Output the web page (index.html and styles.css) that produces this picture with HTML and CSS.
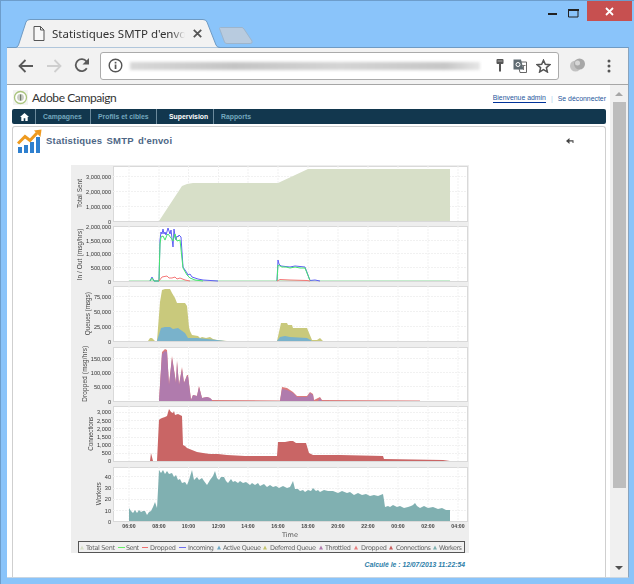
FILE: index.html
```html
<!DOCTYPE html>
<html lang="fr">
<head>
<meta charset="utf-8">
<title>Statistiques SMTP d'envoi</title>
<link rel="stylesheet" href="styles.css">
</head>
<body>
<div class="tabstrip">
  <div class="tabs">
    <div class="tab">
      <svg class="tab-shape" width="208" height="29" viewBox="0 0 208 29"><path d="M0 28.5H2.5Q4.5 28.500 5.500 26L13 3Q14 .5 17 .5H190Q193 .5 194 3L203 26Q204 28.500 207 28.500" fill="#f2f2f2" stroke="#6f9bc4"/></svg>
      <svg class="doc-icon" width="12" height="15" viewBox="0 0 12 15"><path d="M1 .5H7.500L11 4V14.500H1ZM7.500 .5V4H11" fill="#f8f8f8" stroke="#555"/></svg>
      <span class="tab-title">Statistiques SMTP d'envoi</span>
      <svg class="tab-close" width="9" height="9" viewBox="0 0 9 9"><path d="M.8 .8L8.200 8.200M8.200 .8L.8 8.200" stroke="#555" stroke-width="1.800"/></svg>
    </div>
    <svg class="newtab" width="34" height="17" viewBox="0 0 34 17"><path d="M.5 1.500Q.5 .5 1.500 .5H23Q24 .5 25 2L33 14Q34 16.500 31 16.500H8Q6 16.500 5.500 15Z" fill="#b8cbdf" stroke="#9db5cc"/></svg>
  </div>
  <div class="controls">
    <svg class="ctl-min" width="9" height="3" viewBox="0 0 9 3"><rect width="9" height="2" y="1" fill="#222"/></svg>
    <svg class="ctl-max" width="11" height="9" viewBox="0 0 11 9"><path d="M.5 .5H10V8H.5Z" fill="none" stroke="#222"/><rect x="0" y="0" width="11" height="2" fill="#222"/></svg>
    <div class="ctl-close"><svg width="9" height="9" viewBox="0 0 9 9"><path d="M1 1L8 8M8 1L1 8" stroke="#fff" stroke-width="1.800"/></svg></div>
  </div>
</div>

<div class="browser">
  <div class="toolbar">
    <svg class="tb-back" width="16" height="14" viewBox="0 0 16 14"><path d="M15 7H2M7.500 1L1.500 7L7.500 13" fill="none" stroke="#5a5a5a" stroke-width="1.800"/></svg>
    <svg class="tb-fwd" width="16" height="14" viewBox="0 0 16 14"><path d="M1 7H14M8.500 1L14.500 7L8.500 13" fill="none" stroke="#cfcfcf" stroke-width="1.800"/></svg>
    <svg class="tb-reload" width="16" height="15" viewBox="0 0 16 15"><path d="M12.800 10.300A6 6 0 1 1 12.500 3.500" fill="none" stroke="#5a5a5a" stroke-width="1.800"/><path d="M15 0V6.500H8.500Z" fill="#5a5a5a"/></svg>
    <div class="omnibox">
      <svg class="om-info" width="15" height="15" viewBox="0 0 15 15"><circle cx="7.500" cy="7.500" r="6.300" fill="none" stroke="#555" stroke-width="1.400"/><rect x="6.700" y="6.500" width="1.700" height="4.500" fill="#555"/><rect x="6.700" y="3.800" width="1.700" height="1.700" fill="#555"/></svg>
      <div class="om-url"></div>
      <div class="om-icons">
        <svg width="8" height="13" viewBox="0 0 8 13"><path d="M.5 1Q.5 0 1.500 0H6.500Q7.500 0 7.500 1V4Q7.500 5 6.500 5H5V12L4 13L3 12V5H1.500Q.5 5 .5 4Z" fill="#555"/><rect x="1.500" y="1.500" width="5" height="1" fill="#aaa"/></svg>
        <svg width="14" height="14" viewBox="0 0 14 14"><path d="M4.500 3H13.500V13.500H7Z" fill="#fff" stroke="#666"/><path d="M.5 .5H8L10.500 10.500H.5Z" fill="#5f6b72"/><circle cx="5" cy="5.500" r="2" fill="none" stroke="#fff"/><path d="M9 6.500H12.500M10.500 6V11" stroke="#777"/></svg>
        <svg width="15" height="14" viewBox="0 0 15 14"><path d="M7.500 1.200L9.300 5.300L13.800 5.700L10.400 8.600L11.400 13L7.500 10.700L3.600 13L4.600 8.600L1.200 5.700L5.700 5.300Z" fill="#fff" stroke="#555" stroke-width="1.500"/></svg>
      </div>
    </div>
    <svg class="tb-profile" width="17" height="15" viewBox="0 0 17 15"><circle cx="6.500" cy="8" r="5.500" fill="#c2c2c2"/><circle cx="10.500" cy="6" r="5.500" fill="#a8a8a8"/><circle cx="8.500" cy="5" r="2.500" fill="#d6d6d6"/></svg>
    <svg class="tb-menu" width="4" height="14" viewBox="0 0 4 14"><circle cx="2" cy="2" r="1.500" fill="#555"/><circle cx="2" cy="7" r="1.500" fill="#555"/><circle cx="2" cy="12" r="1.500" fill="#555"/></svg>
  </div>

  <div class="viewport">
    <div class="page">
      <header class="page-head">
        <div class="brand">
          <svg class="brand-logo" width="15" height="15" viewBox="0 0 15 15"><rect width="15" height="15" fill="#f3f3f3"/><circle cx="7.500" cy="7.500" r="6" fill="#fff" stroke="#a9c47c" stroke-width="1.300"/><circle cx="7.500" cy="7.500" r="3.400" fill="#c9ccc4"/><rect x="7" y="4.500" width="1.200" height="6" fill="#6e7a6a"/></svg>
          <span class="brand-name">Adobe Campaign</span>
        </div>
        <div class="user-links">
          <a class="link-user">Bienvenue admin</a>
          <span class="link-sep">|</span>
          <a class="link-out">Se déconnecter</a>
        </div>
      </header>
      <nav class="nav">
        <span class="nav-item nav-home"><svg width="9" height="8" viewBox="0 0 9 8"><path d="M4.500 0L9 4H7.700V8H5.300V5.300H3.700V8H1.300V4H0Z" fill="#fff"/></svg></span>
        <span class="nav-item nav-a">Campagnes</span>
        <span class="nav-item nav-b">Profils et cibles</span>
        <span class="nav-item nav-c active">Supervision</span>
        <span class="nav-item nav-d">Rapports</span>
      </nav>
      <section class="panel">
        <div class="panel-head">
          <div class="panel-title">
            <svg class="panel-icon" width="25" height="25" viewBox="0 0 25 25"><path d="M1 18H5V24H1ZM7 16H11V24H7ZM13 13H17V24H13ZM19 8H23V24H19Z" fill="#2f80cf"/><path d="M1 14.500L8 7.500L13 11.500L20 4" fill="none" stroke="#ee9a1f" stroke-width="3"/><path d="M17 1.500L24.500 .5L23.500 8Z" fill="#ee9a1f"/></svg>
            <h1 class="panel-name">Statistiques SMTP d'envoi</h1>
          </div>
          <svg class="panel-back" width="8" height="6" viewBox="0 0 8 6"><path d="M3.500 0V6L0 3ZM3 2.200H7.500V5H6.500V3.500H3Z" fill="#444"/></svg>
        </div>

        <svg class="chart" width="398" height="393" viewBox="71 160 398 393">
          <rect class="c-bg" x="71" y="165" width="398" height="388"/>
          <g class="plots">
            <rect x="113.500" y="166.500" width="354" height="55"/>
            <rect x="113.500" y="226.500" width="354" height="55"/>
            <rect x="113.500" y="286.500" width="354" height="55"/>
            <rect x="113.500" y="347.500" width="354" height="54"/>
            <rect x="113.500" y="406.500" width="354" height="55"/>
            <rect x="113.500" y="467.500" width="354" height="54"/>
          </g>
          <path class="grid" d="M129 166V221M159 166V221M188.500 166V221M218.500 166V221M248 166V221M278 166V221M308 166V221M338 166V221M368 166V221M398 166V221M428 166V221M458 166V221M129 226V281M159 226V281M188.500 226V281M218.500 226V281M248 226V281M278 226V281M308 226V281M338 226V281M368 226V281M398 226V281M428 226V281M458 226V281M129 286V341M159 286V341M188.500 286V341M218.500 286V341M248 286V341M278 286V341M308 286V341M338 286V341M368 286V341M398 286V341M428 286V341M458 286V341M129 347V401M159 347V401M188.500 347V401M218.500 347V401M248 347V401M278 347V401M308 347V401M338 347V401M368 347V401M398 347V401M428 347V401M458 347V401M129 406V461M159 406V461M188.500 406V461M218.500 406V461M248 406V461M278 406V461M308 406V461M338 406V461M368 406V461M398 406V461M428 406V461M458 406V461M129 467V521M159 467V521M188.500 467V521M218.500 467V521M248 467V521M278 467V521M308 467V521M338 467V521M368 467V521M398 467V521M428 467V521M458 467V521"/>
          <path class="grid" d="M113 206.500H467M113 191.500H467M113 176.500H467M113 267.500H467M113 253.500H467M113 240.500H467M113 326.500H467M113 311.500H467M113 296.500H467M113 386.500H467M113 372.500H467M113 358.500H467M113 453.500H467M113 445.500H467M113 437.500H467M113 428.500H467M113 420.500H467M113 412.500H467M113 510.500H467M113 499.500H467M113 488.500H467M113 476.500H467"/>

          <path class="a-total" d="M159 221L182 186L187 184L193 183H278L308 169H450V221Z"/>

          <path class="l-base" d="M129 280.500H450"/>
          <path class="l-blue" d="M150 281L152 277L154 281H159L160 240L161 232L162 234L163 229L164 234L165 232L166 235L168 228L170 234L171 230L173 247L174 229L175 236L176 240L177 236L178 237L179 235L181 237L183 267L185 270L187 273L188 275L190 274L192 277L195 278L198 279L203 280L218 281M277 281L278 260L279 264L281 266L290 267L295 266L305 267L310 280.500L315 280L320 281"/>
          <path class="l-green" d="M150 281L152 278L154 281H159L160 244L161 237L163 236L165 240L167 235L168 234L171 238L173 241L175 234L177 241L180 240L183 268L187 275L190 278L195 280L203 281M277 281L278 265L282 267L286 267L290 268L295 267L300 268L305 268L310 280.500"/>
          <path class="l-red" d="M159 281L162 277L167 276L169 278L172 278L175 277L177 279L180 278L185 280L190 281M277 281L280 279.500L290 280L307 280.500L310 281"/>

          <path class="a-olive" d="M148 341L150 338L152 338L155 341H157L160 302L162 290L165 289L170 289L172 293L175 298L177 303L185 303L187 306L189 327L190 331L192 335L198 336L200 338L202 337L206 338L210 337L213 339L217 340L227 341H277L281 323L287 323L288 325L292 325L293 328L307 328L312 340L317 340L320 338L323 341H340Z"/>
          <path class="a-blue" d="M157 341L161 328L165 327L170 327L173 329L178 328L185 333L188 338L197 338L217 340L225 341ZM277 341L280 337L285 336L290 337L307 338L312 341Z"/>

          <path class="a-drop-edge" d="M159 401L162 352L165 349L167 350L169 385L172 356L176 383L177 360L179 385L182 367L184 383L187 375L188 375L191 400L193 395L197 396L199 386L202 398L207 397L210 398L212 400L280 400.500L282 387L287 388L293 392L297 396L307 396L310 392L313 394L314 400L320 397L322 400L420 400.500V401H159Z"/>
          <path class="a-purple" d="M159 401L162 354L165 351L167 352L169 385L172 358L176 383L177 362L179 385L182 369L184 383L187 376L188 376L191 400L193 395L197 396L199 387L202 398L207 397L210 398L212 400V401ZM280 401L282 389L287 390L293 393L297 397L307 397L310 393L313 395L314 401ZM318 401L320 398L322 401Z"/>

          <path class="a-conn" d="M150 461L151 453L153 461H157L159 420L160 419L162 418L165 417L167 416L169 409L171 412L173 413L174 411L175 415L178 414L182 416L183 445L185 446L187 448L192 450L197 452L203 453L210 454L218 454L227 455L245 456L270 456L277 456L278 442L285 442L290 441L293 441L296 443L306 443L309 453L313 455L340 455L383 456L384 459L443 460L450 461Z"/>
          <path class="a-work" d="M129 521V508L131 511L133 513L135 510L137 513L139 510L141 512L143 511L145 511L147 515L149 512L151 511L153 507L155 502L157 508L158 490L159 470L161 473L163 470L165 474L167 471L169 474L172 473L174 477L176 475L178 480L180 479L182 483L185 482L187 485L189 480L192 470L194 480L197 477L199 480L202 478L204 481L207 485L210 480L213 476L215 471L217 478L219 480L221 477L224 477L226 481L228 483L231 479L233 482L235 481L238 483L240 481L243 483L246 482L250 485L252 483L255 485L258 483L260 486L264 484L267 487L270 485L273 487L276 486L279 488L283 486L287 488L290 487L293 481L295 489L298 489L300 491L303 490L305 492L308 490L311 491L313 488L316 491L318 490L320 492L324 490L328 491L333 491L338 493L342 491L347 493L350 492L354 495L358 493L362 495L366 494L370 496L374 495L378 496L383 494L384 500L385 507L388 506L390 507L393 505L397 507L400 506L404 508L408 507L411 506L413 505L415 503L417 506L420 508L424 506L428 508L433 507L438 509L442 508L446 510L450 510V521Z"/>

          <g class="ax-y">
            <text x="111" y="209">1,000,000</text><text x="111" y="194">2,000,000</text><text x="111" y="179">3,000,000</text><text x="111" y="224">0</text>
            <text x="111" y="229">2,000,000</text><text x="111" y="243">1,500,000</text><text x="111" y="256">1,000,000</text><text x="111" y="270">500,000</text><text x="111" y="284">0</text>
            <text x="111" y="299">75,000</text><text x="111" y="314">50,000</text><text x="111" y="329">25,000</text><text x="111" y="344">0</text>
            <text x="111" y="361">150,000</text><text x="111" y="375">100,000</text><text x="111" y="389">50,000</text><text x="111" y="404">0</text>
            <text x="111" y="414">3,000</text><text x="111" y="423">2,500</text><text x="111" y="431">2,000</text><text x="111" y="439">1,500</text><text x="111" y="447">1,000</text><text x="111" y="455">500</text><text x="111" y="463">0</text>
            <text x="111" y="479">40</text><text x="111" y="490">30</text><text x="111" y="501">20</text><text x="111" y="513">10</text><text x="111" y="524">0</text>
          </g>
          <g class="ax-name">
            <text transform="translate(82 193.500) rotate(-90)" textLength="29">Total Sent</text>
            <text transform="translate(82 254.500) rotate(-90)" textLength="52">In / Out (msg/hrs)</text>
            <text transform="translate(90 313.700) rotate(-90)" textLength="43">Queues (msgs)</text>
            <text transform="translate(87 373.800) rotate(-90)" textLength="56">Dropped (msg/hrs)</text>
            <text transform="translate(93 433.700) rotate(-90)" textLength="34">Connections</text>
            <text transform="translate(101 493.700) rotate(-90)" textLength="23">Workers</text>
          </g>
          <g class="ax-x">
            <text x="129" y="528">06:00</text><text x="159" y="528">08:00</text><text x="188.500" y="528">10:00</text><text x="218.500" y="528">12:00</text><text x="248" y="528">14:00</text><text x="278" y="528">16:00</text><text x="308" y="528">18:00</text><text x="338" y="528">20:00</text><text x="368" y="528">22:00</text><text x="398" y="528">00:00</text><text x="428" y="528">02:00</text><text x="458" y="528">04:00</text>
          </g>
          <text class="ax-time" x="290" y="537">Time</text>

          <rect class="lg-box" x="78.500" y="541.500" width="386" height="11"/>
          <path fill="#d7dfc8" d="M80 549.500L82 545.500L84 549.500Z"/>
          <path stroke="#66ee66" d="M118 547.500H125"/>
          <path stroke="#ee7070" d="M142 547.500H148"/>
          <path stroke="#7070ee" d="M179 547.500H186"/>
          <path fill="#6fa8c4" d="M217 549.500L219 545.500L221 549.500Z"/>
          <path fill="#c4c46e" d="M263 549.500L265 545.500L267 549.500Z"/>
          <path fill="#b07bad" d="M319 549.500L321 545.500L323 549.500Z"/>
          <path fill="#e88080" d="M354 549.500L356 545.500L358 549.500Z"/>
          <path fill="#c95f5f" d="M389 549.500L391 545.500L393 549.500Z"/>
          <path fill="#7fb0b0" d="M433 549.500L435 545.500L437 549.500Z"/>
          <g class="lg-t">
            <text x="86" y="550" textLength="29">Total Sent</text>
            <text x="126" y="550" textLength="13">Sent</text>
            <text x="150" y="550" textLength="26">Dropped</text>
            <text x="188" y="550" textLength="26">Incoming</text>
            <text x="223" y="550" textLength="38">Active Queue</text>
            <text x="270" y="550" textLength="46">Deferred Queue</text>
            <text x="325" y="550" textLength="26">Throttled</text>
            <text x="361" y="550" textLength="26">Dropped</text>
            <text x="396" y="550" textLength="35">Connections</text>
            <text x="439" y="550" textLength="23">Workers</text>
          </g>
        </svg>
        <p class="calc">Calculé le : 12/07/2013 11:22:54</p>
      </section>
    </div>
    <div class="scrollbar">
      <svg width="8" height="4" viewBox="0 0 8 4"><path d="M4 0L8 4H0Z" fill="#a6a6a6"/></svg>
      <div class="thumb"></div>
      <svg width="8" height="4" viewBox="0 0 8 4"><path d="M0 0H8L4 4Z" fill="#505050"/></svg>
    </div>
  </div>
</div>
</body>
</html>
```

FILE: styles.css
```css
* { box-sizing: border-box; }
html, body { margin: 0; padding: 0; }
body {
  width: 634px;
  height: 584px;
  overflow: hidden;
  background: #8ac4fa;
  border-top: 1px solid #6d9dcb;
  border-left: 1px solid #6d9dcb;
  font-family: "Liberation Sans", Arial, sans-serif;
}

.tabstrip {
  height: 46px;
  padding-left: 6px;
  display: flex;
  justify-content: space-between;
}
.tabs { display: flex; align-items: flex-end; }
.tab {
  position: relative;
  width: 208px;
  height: 28px;
  margin-left: 6px;
  display: flex;
  align-items: center;
  padding: 0 0 0 20px;
  z-index: 1;
}
.tab-shape { position: absolute; left: 0; top: 0; }
.doc-icon { position: relative; flex: none; }
.tab-title {
  position: relative;
  width: 133px;
  margin-left: 7px;
  flex: none;
  overflow: hidden;
  white-space: nowrap;
  font: 11.500px "Noto Sans", sans-serif;
  color: #333;
  -webkit-mask-image: linear-gradient(90deg, #000 90%, transparent 100%);
  mask-image: linear-gradient(90deg, #000 90%, transparent 100%);
}
.tab-close { position: relative; margin-left: 8px; flex: none; }
.newtab { margin: 0 0 3px -2px; }
.controls { display: flex; align-items: flex-start; margin-right: 2px; }
.ctl-min { margin: 11px 11px 0 0; }
.ctl-max { margin: 8px 8px 0 0; }
.ctl-close {
  width: 45px;
  height: 20px;
  background: #c75050;
  display: flex;
  align-items: center;
  justify-content: center;
}

.browser {
  width: 622px;
  height: 531px;
  margin-left: 6px;
  background: #f2f2f2;
  border-top: 1px solid #6f9bc4;
  border-right: 1px solid #8aa4bd;
  border-bottom: 1px solid #c9d6e2;
  display: flex;
  flex-direction: column;
  overflow: hidden;
}
.toolbar {
  height: 37px;
  flex: none;
  display: flex;
  align-items: center;
  padding: 0 0 1px 11px;
  border-bottom: 1px solid #a6a6a6;
}
.tb-back { flex: none; }
.tb-fwd { flex: none; margin-left: 12px; }
.tb-reload { flex: none; margin-left: 12px; }
.omnibox {
  width: 459px;
  height: 28px;
  margin: 0 0 0 10px;
  flex: none;
  display: flex;
  align-items: center;
  padding: 0 7px 0 7px;
  background: #fff;
  border: 1px solid #ababab;
  border-radius: 3px;
}
.om-info { flex: none; }
.om-url {
  width: 350px;
  height: 8px;
  margin-left: 7px;
  flex: none;
  background: linear-gradient(90deg, #d8d8d8, #c4c4c4 30%, #d4d4d4 60%, #c6c6c6 90%, #e6e6e6);
  filter: blur(1.500px);
}
.om-icons {
  margin-left: auto;
  display: flex;
  align-items: center;
  gap: 9px;
}
.tb-profile { flex: none; margin-left: 10px; }
.tb-menu { flex: none; margin-left: 21px; }

.viewport { flex: 1; min-height: 0; display: flex; background: #fff; }
.page {
  width: 603px;
  flex: none;
  padding: 0 4px 0 5px;
  display: flex;
  flex-direction: column;
}
.page-head {
  height: 24px;
  flex: none;
  display: flex;
  align-items: center;
  justify-content: space-between;
}
.brand { display: flex; align-items: center; margin-left: 1px; }
.brand-name {
  margin-left: 4px;
  font: 12px Lato, sans-serif;
  letter-spacing: -.4px;
  color: #333;
}
.user-links {
  display: flex;
  align-items: center;
  margin-top: 2px;
  font-size: 6.900px;
  color: #26569c;
}
.link-user { border-bottom: 1px solid #00339a; line-height: 8px; }
.link-sep { margin: 0 5px; color: #a8d0ee; }

.nav {
  height: 15px;
  flex: none;
  display: flex;
  background: #12374e;
  border-radius: 2px;
  font-size: 6.850px;
  font-weight: bold;
  color: #74a8bf;
}
.nav-item {
  display: flex;
  align-items: center;
  border-right: 1px solid #6c8a9c;
  padding-left: 7px;
}
.nav-home { width: 24px; padding-left: 8px; }
.nav-a { width: 55px; }
.nav-b { width: 66px; }
.nav-c { width: 57px; padding-left: 12px; color: #fff; }
.nav-d { border: 0; }

.panel {
  flex: 1;
  min-height: 0;
  margin-top: 2px;
  background: #fff;
  border: 1px solid #cfcfcf;
  border-bottom: 0;
  border-radius: 3px 3px 0 0;
}
.panel-head {
  height: 33px;
  display: flex;
  justify-content: space-between;
  padding: 2px 31px 0 4px;
}
.panel-title { display: flex; align-items: flex-start; }
.panel-icon { flex: none; }
.panel-name {
  margin: 6px 0 0 4px;
  font-size: 9.500px;
  font-weight: bold;
  letter-spacing: .2px;
  word-spacing: 1.500px;
  color: #4d6685;
}
.panel-back { margin-top: 9px; }

.chart { display: block; margin-left: 58px; filter: blur(.35px); }
.c-bg { fill: #eeeeee; }
.plots rect { fill: #fff; stroke: #d9d9d9; }
.grid { fill: none; stroke: #f1f1f1; stroke-dasharray: 2 1; }
.a-total { fill: #d7dfc8; }
.l-base { fill: none; stroke: #c4ebcc; }
.l-blue { fill: none; stroke: #5f60f5; }
.l-green { fill: none; stroke: #45e56e; }
.l-red { fill: none; stroke: #f57878; }
.a-olive { fill: #c9c97c; }
.a-blue { fill: #79b2cb; }
.a-drop-edge { fill: #dc7c7c; }
.a-purple { fill: #b07bad; }
.a-conn { fill: #c96565; }
.a-work { fill: #80b0b1; }
.ax-y text { font: 5.600px "Liberation Sans", sans-serif; fill: #333; text-anchor: end; }
.ax-name text { font: 6.400px "Liberation Sans", sans-serif; fill: #444; text-anchor: middle; }
.ax-x text { font: bold 5.200px "Liberation Sans", sans-serif; fill: #444; text-anchor: middle; }
.ax-time { font: 6.500px "DejaVu Sans", sans-serif; fill: #555; text-anchor: middle; }
.lg-box { fill: #f0f0f0; stroke: #555; }
.lg-t text { font: 6.500px "DejaVu Sans", sans-serif; fill: #666; }

.calc {
  margin: 8px 0 0;
  width: 452px;
  text-align: right;
  font-size: 6.800px;
  font-weight: bold;
  font-style: italic;
  color: #2d7ea8;
}

.scrollbar {
  flex: 1;
  background: #f0f0f0;
  display: flex;
  flex-direction: column;
  align-items: center;
  padding: 7px 0 7px;
}
.thumb {
  width: 13px;
  height: 386px;
  margin: 6px 0 auto;
  background: #bdbdbd;
}
```
